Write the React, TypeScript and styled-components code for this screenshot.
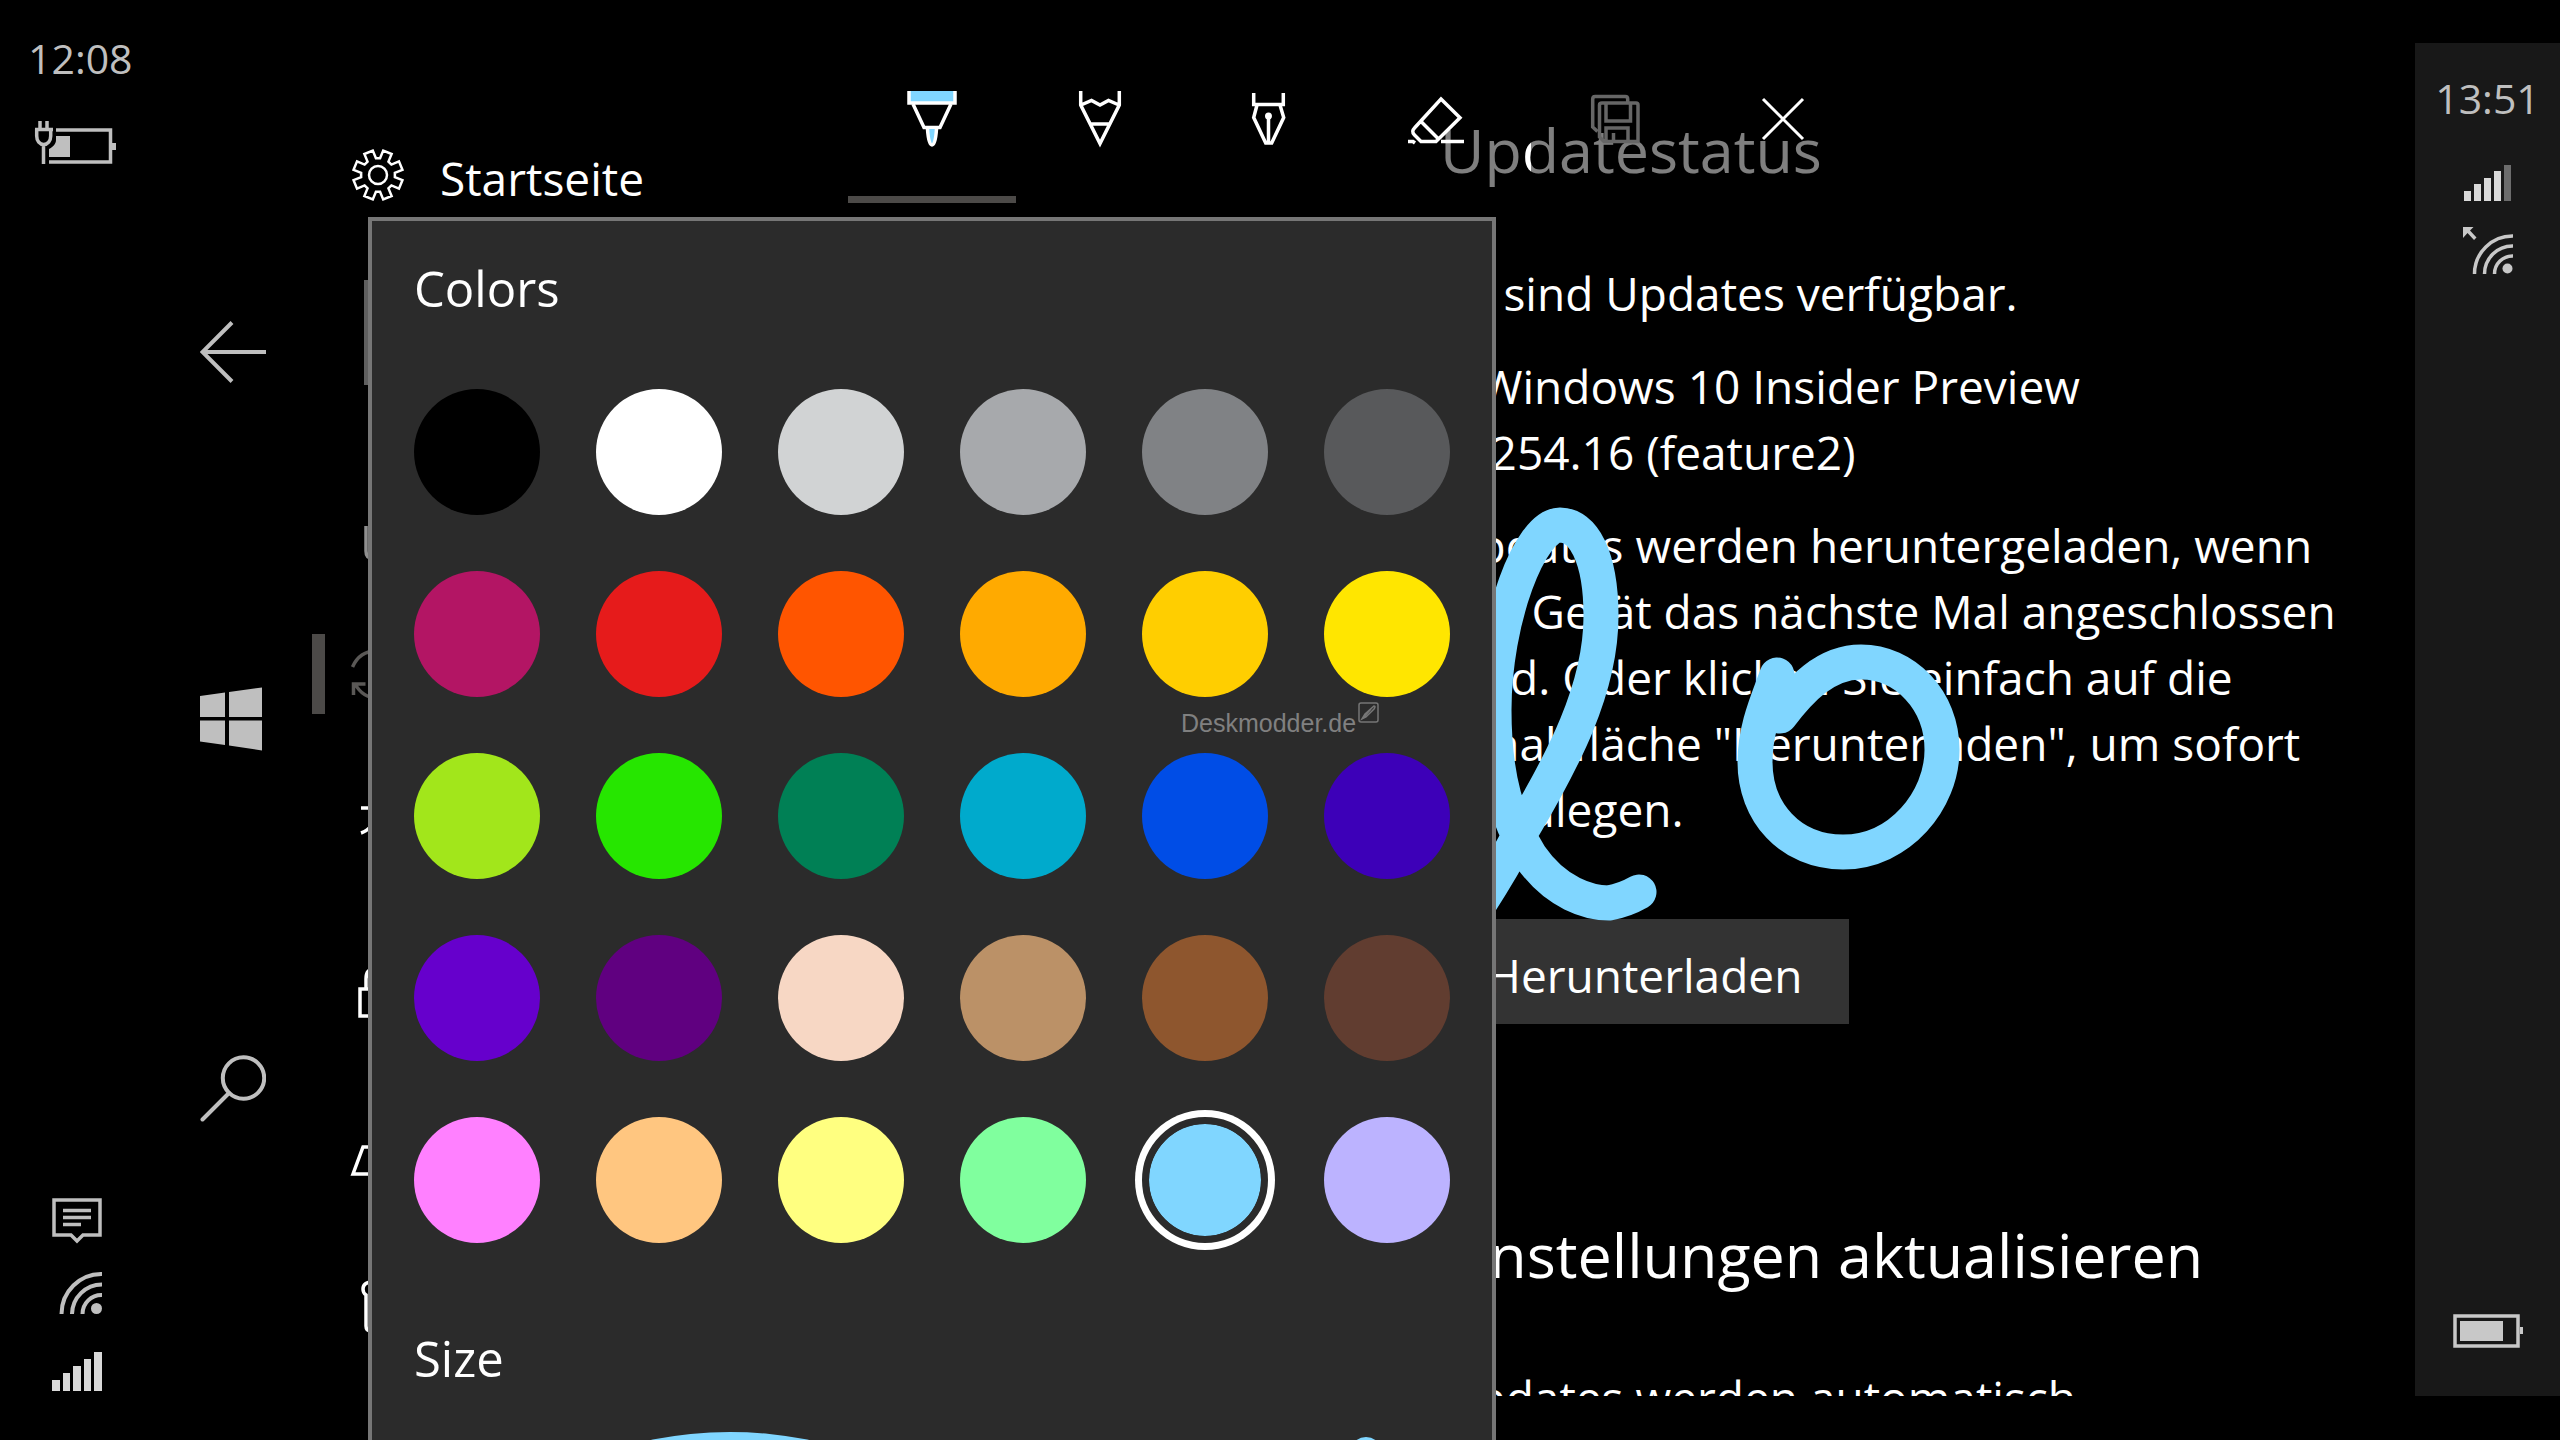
import React, { useState } from "react";
import styled, { createGlobalStyle } from "styled-components";

const accent = "#80d6ff";
const panelColor = "#2b2b2b";
const muted = "#bfbfbf";

const GlobalStyle = createGlobalStyle`
  * { box-sizing: border-box; }
  body {
    margin: 0;
    background: #000;
    color: #fff;
    font-family: "Segoe UI", "Open Sans", "Noto Sans", sans-serif;
  }
`;

const Desktop = styled.div`
  display: flex;
  height: 100vh;
  overflow: hidden;
  background: #000;
`;

const StatusColumn = styled.aside`
  display: flex;
  flex: none;
  flex-direction: column;
  justify-content: space-between;
  width: 168px;
  padding: 30px 0 49px;
`;

const StatusTop = styled.div`
  display: flex;
  flex-direction: column;
  gap: 34px;
  padding-left: 28px;
`;

const StatusBottom = styled.div`
  display: flex;
  flex-direction: column;
  gap: 28px;
  padding-left: 52px;
`;

const Clock = styled.time`
  font-size: 41px;
  line-height: 56px;
  color: ${muted};
`;

const Navigation = styled.nav`
  display: flex;
  flex: none;
  flex-direction: column;
  justify-content: space-between;
  width: 144px;
  padding: 321px 32px 318px;
`;

const NavButton = styled.button`
  display: flex;
  padding: 0;
  border: 0;
  background: none;
`;

const Screen = styled.div`
  position: relative;
  flex: 1;
  display: flex;
  min-width: 0;
  padding: 43px 0 44px;
`;

const SettingsPage = styled.div`
  display: flex;
  flex: 1;
  min-width: 0;
  overflow: hidden;
`;

const Sidebar = styled.div`
  flex: none;
  width: 1128px;
  padding-top: 100px;
`;

const HomeLink = styled.a`
  display: flex;
  align-items: center;
  gap: 34px;
  height: 64px;
  padding-left: 38px;
  color: #fff;
  font-size: 46px;
  line-height: 66px;
  text-decoration: none;
`;

const HomeLabel = styled.span`
  padding-top: 5px;
`;

const SearchBox = styled.input`
  display: block;
  width: 600px;
  height: 105px;
  margin: 73px 0 55px 52px;
  border: 4px solid #5f5f5f;
  background: #000;
`;

const Category = styled.a`
  display: flex;
  align-items: center;
  gap: 19px;
  height: 156px;
`;

const Marker = styled.span<{ $active: boolean }>`
  width: 13px;
  height: 80px;
  background: ${(p) => (p.$active ? "#4c4a48" : "transparent")};
`;

const Content = styled.main`
  flex: 1;
  min-width: 0;
  padding-top: 65px;
  white-space: nowrap;
`;

const Heading = styled.h1`
  margin: 0;
  font-size: 61px;
  font-weight: 400;
  line-height: 84px;
`;

const Section = styled.section`
  display: flex;
  flex-direction: column;
  align-items: flex-start;
  gap: 27px;
  padding: 68px 0 77px 4px;
`;

const Paragraph = styled.p<{ $indent?: number }>`
  margin: 0;
  font-size: 46px;
  line-height: 66px;
  text-indent: ${(p) => p.$indent ?? 0}px;
`;

const Release = styled(Paragraph)`
  margin-left: -6px;
`;

const DownloadButton = styled.button`
  display: block;
  height: 105px;
  margin-bottom: 189px;
  padding: 6px 47px 0;
  border: 0;
  background: #333;
  color: #fff;
  font: inherit;
  font-size: 46px;
`;

const UpdateNote = styled(Paragraph)`
  padding: 67px 0 0 4px;
`;

const PhoneStatus = styled.aside`
  display: flex;
  flex: none;
  flex-direction: column;
  align-items: center;
  width: 145px;
  padding: 27px 0 48px;
  background: #181818;
`;

const PhoneIcons = styled.div`
  display: flex;
  flex: 1;
  flex-direction: column;
  align-items: center;
  gap: 26px;
  padding-top: 38px;
`;

const Ink = styled.svg`
  position: absolute;
  top: 0;
  left: 1128px;
  pointer-events: none;
`;

const SketchSheet = styled.div`
  position: absolute;
  inset: 0 auto 0 56px;
  display: flex;
  flex-direction: column;
  gap: 14px;
  padding-top: 35px;
`;

const Toolbar = styled.div`
  display: flex;
  gap: 11px;
  padding-left: 480px;
`;

const ToolGroup = styled.div`
  display: flex;
  background: rgba(0, 0, 0, 0.5);
`;

const ToolButton = styled.button<{ $active?: boolean }>`
  display: flex;
  align-items: center;
  justify-content: center;
  width: 168px;
  height: 168px;
  padding: 7px 0 0;
  border: 0;
  border-bottom: 7px solid ${(p) => (p.$active ? "#4c4a48" : "transparent")};
  background: none;
  color: #fff;
  &:disabled { color: #666; }
`;

const Panel = styled.section`
  flex: 1;
  width: 1128px;
  min-height: 0;
  overflow: hidden;
  padding: 34px 42px 0;
  border: 4px solid #767676;
  border-bottom: 0;
  background: ${panelColor};
`;

const PanelTitle = styled.h2`
  margin: 0;
  font-size: 49px;
  font-weight: 400;
  line-height: 66px;
`;

const Swatches = styled.div`
  display: grid;
  grid-template-columns: repeat(6, 126px);
  gap: 56px;
  padding: 68px 0 82px;
`;

const Swatch = styled.input<{ $color: string }>`
  appearance: none;
  width: 126px;
  height: 126px;
  margin: 0;
  border-radius: 50%;
  background: ${(p) => p.$color};
  &:checked {
    border: 7px solid ${panelColor};
    background-clip: padding-box;
    box-shadow: 0 0 0 7px #fff;
  }
`;

const Preview = styled.svg`
  display: block;
  margin-top: 41px;
`;

const Watermark = styled.div`
  position: absolute;
  top: 702px;
  left: 869px;
  display: flex;
  align-items: flex-start;
  gap: 2px;
  color: #808080;
  font-family: "Liberation Sans Narrow", "Liberation Sans", sans-serif;
  font-size: 25px;
  line-height: 42px;
`;

const palette = [
  "#000000", "#ffffff", "#d1d3d4", "#a7a9ac", "#808285", "#58595b",
  "#b31564", "#e61b1b", "#ff5500", "#ffaa00", "#ffce00", "#ffe600",
  "#a2e61b", "#26e600", "#008055", "#00aacc", "#004de6", "#3d00b8",
  "#6600cc", "#600080", "#f7d7c4", "#bb9167", "#8e562e", "#613d30",
  "#ff80ff", "#ffc680", "#ffff80", "#80ff9e", "#80d6ff", "#bcb3ff",
];

function gearPath() {
  const points: string[] = [];
  for (let i = 0; i < 8; i++) {
    const corners = [[-7, 17], [7, 17], [12, 25], [33, 25]];
    for (const [offset, radius] of corners) {
      const a = ((i * 45 + offset) * Math.PI) / 180;
      points.push(`${(Math.sin(a) * radius).toFixed(2)} ${(-Math.cos(a) * radius).toFixed(2)}`);
    }
  }
  return `M${points.join("L")}Z`;
}

const GearIcon = () => (
  <svg width="56" height="56" viewBox="-28 -28 56 56" fill="none" stroke="#fff" strokeWidth="2.5">
    <path d={gearPath()} />
    <circle r="9" />
  </svg>
);

const ChargingIcon = () => (
  <svg width="92" height="46" viewBox="28 121 92 46" fill="none" stroke={muted} strokeWidth="3.5">
    <path d="M40 122v8M47 122v8M35 130.500h18M36.700 130v7c0 5 3 8.500 7 8.500s7-3.500 7-8.500v-7M43.500 146v19" />
    <path d="M56 131h54.500v32H49" />
    <path d="M56 137h14v21H49v-8c4-2 7-5 7-9zM112 144h4v7h-4z" fill={muted} stroke="none" />
  </svg>
);

const MessageIcon = () => (
  <svg width="50" height="46" viewBox="52 1198 50 46" fill="none" stroke={muted} strokeWidth="3.500">
    <path d="M54 1200h46v35H83l-6 6-6-6H54z" />
    <path d="M63 1210.500h28M63 1217.500h28M63 1224.500h18" />
  </svg>
);

const WifiIcon = () => (
  <svg width="50" height="42" viewBox="52 1272 50 42" fill="none" stroke={muted} strokeWidth="4">
    <path d="M61.500 1314a40 40 0 0 1 40.500-40M72 1314a30 30 0 0 1 30-29.500M82.500 1314a19 19 0 0 1 19.500-19" />
    <circle cx="96.500" cy="1308.500" r="5.500" fill={muted} stroke="none" />
  </svg>
);

const SignalIcon = () => (
  <svg width="50" height="49" viewBox="52 1342 50 49" fill="#d9d9d9">
    <path d="M52 1380h8v11h-8zM63 1373h7v18h-7zM73 1366h8v25h-8zM84 1359h7v32h-7zM94 1352h8v39h-8z" />
  </svg>
);

const PhoneSignalIcon = () => (
  <svg width="47" height="37" viewBox="2464 164 47 37" fill="#d9d9d9">
    <path d="M2464 191h7v10h-7zM2474 184h7v17h-7zM2484 178h7v23h-7zM2494 171h7v30h-7z" />
    <path d="M2504 165h7v36h-7z" fill="#6c6c6c" />
  </svg>
);

const PhoneWifiIcon = () => (
  <svg width="50" height="47" viewBox="2461 227 50 47" fill="none" stroke="#c8c8c8" strokeWidth="3.500">
    <path d="M2472.500 274a38 38 0 0 1 38.500-38M2482.500 274a28 28 0 0 1 28.500-28M2492.500 274a18 18 0 0 1 18.500-18" />
    <circle cx="2505.500" cy="268.500" r="5" fill="#c8c8c8" stroke="none" />
    <path d="M2461 227h10.500l-3.500 3.500 6.500 7-2.500 2.500-6.500-7-4.500 5z" fill="#c8c8c8" stroke="none" />
  </svg>
);

const PhoneBatteryIcon = () => (
  <svg width="70" height="34" viewBox="2454 1314 70 34" fill="none" stroke="#c8c8c8" strokeWidth="3.500">
    <path d="M2456 1316h63v30h-63z" />
    <path d="M2461 1321h43v20h-43zM2521 1327h3v7h-3z" fill="#c8c8c8" stroke="none" />
  </svg>
);

const BackIcon = () => (
  <svg width="66" height="62" viewBox="200 321 66 62" fill="none" stroke={muted} strokeWidth="4">
    <path d="M232 322.500l-29.500 29.500 29.500 29.500M203 352h63" />
  </svg>
);

const WindowsIcon = () => (
  <svg width="66" height="66" viewBox="200 685 66 66" fill={muted}>
    <path d="M200 695l25-3.500v24.500h-25zM229 691l33-4.500v29.500h-33zM200 719.500h25v24.500l-25-3.500zM229 719.500h33v30l-33-5z" />
  </svg>
);

const SearchIcon = () => (
  <svg width="66" height="67" viewBox="200 1055 66 67" fill="none" stroke={muted} strokeWidth="4" strokeLinecap="round">
    <circle cx="243.500" cy="1078" r="20.700" />
    <path d="M229 1093l-26.500 26.500" />
  </svg>
);

const categoryShapes = [
  <path key="system" d="M366 526v25q0 7 6 7h28v-32" stroke="#8f8f8f" />,
  <path key="update" d="M352.500 667q7-16 24-16M353.500 695v-11h12M355 684q8 14 22 14" stroke="#5a5856" />,
  <path key="language" d="M361 808h24M361 833q12-4 18-22" />,
  <path key="privacy" d="M360 989h36v27h-36zM366 989v-10q0-10 8-10" />,
  <path key="user" d="M353 1174l10-27h28l10 27zM370 1131v2" />,
  <path key="tools" d="M373 1282q-10 0-10 7 0 4 3 6v31q0 5 5 5h4" />,
];
const categoryNames = ["System", "Update", "Sprache", "Datenschutz", "Konten", "Extras"];

const MarkerPenIcon = () => (
  <svg width="60" height="60" viewBox="902 89 60 60" fill="none" stroke="#fff" strokeWidth="3.500">
    <path d="M909 91h46v12h-46z" fill={accent} stroke="none" />
    <path d="M909 91v12h46v-12" />
    <path d="M913 104l11 23.500h16l11-23.500" />
    <path d="M927.500 129q1 16 4.500 16t4.500-16" fill={accent} />
  </svg>
);

const PencilIcon = () => (
  <svg width="60" height="60" viewBox="1070 89 60 60" fill="none" stroke="#fff" strokeWidth="3.500">
    <path d="M1080.700 91v14l19.300 38.500 19.300-38.500v-14M1081 105l10.500-4.500 8.500 4.500 8.500-4.500 10.500 4.500M1091 124h18" />
  </svg>
);

const FountainPenIcon = () => (
  <svg width="60" height="60" viewBox="1238 89 60 60" fill="none" stroke="#fff" strokeWidth="3.500">
    <path d="M1253.700 93v11.500h29.600v-11.500M1257 105l-3.300 12.500 12 25.500h6l12-25.500-3.700-12.500M1268.500 117v26" />
    <circle cx="1268.500" cy="116" r="3.500" fill="#fff" stroke="none" />
  </svg>
);

const EraserIcon = () => (
  <svg width="60" height="60" viewBox="1406 89 60 60" fill="none" stroke="#fff" strokeWidth="3.500">
    <path d="M1441 99l19 18.700-24 23.800h-15l-6.500-6.500q-3.500-3.500 0-7zM1420.500 121l17 17M1408 141.500h5l2 1.500M1441 141.500h23" />
  </svg>
);

const SaveIcon = () => (
  <svg width="60" height="60" viewBox="1585 89 60 60" fill="none" stroke="currentColor" strokeWidth="3.500">
    <path d="M1597.500 131.500l-4.800-4.500v-28q0-2.500 2.500-2.500h30q2.500 0 2.500 2.500v4" />
    <path d="M1602 103h34q2 0 2 2v36.500h-34l-4.500-4.500v-32q0-2 2.500-2zM1606 104v17h24.500v-17M1606 141v-13h22v13M1613.500 133v8" />
  </svg>
);

const CloseIcon = () => (
  <svg width="60" height="60" viewBox="1753 89 60 60" fill="none" stroke="#fff" strokeWidth="3">
    <path d="M1763 99l40 40M1803 99l-40 40" />
  </svg>
);

export default function App() {
  const [color, setColor] = useState("#80d6ff");

  return (
    <>
      <GlobalStyle />
      <Desktop>
        <StatusColumn>
          <StatusTop>
            <Clock>12:08</Clock>
            <ChargingIcon />
          </StatusTop>
          <StatusBottom>
            <MessageIcon />
            <WifiIcon />
            <SignalIcon />
          </StatusBottom>
        </StatusColumn>

        <Navigation>
          <NavButton aria-label="Zurück"><BackIcon /></NavButton>
          <NavButton aria-label="Start"><WindowsIcon /></NavButton>
          <NavButton aria-label="Suchen"><SearchIcon /></NavButton>
        </Navigation>

        <Screen>
          <SettingsPage>
            <Sidebar>
              <HomeLink href="#start"><GearIcon /><HomeLabel>Startseite</HomeLabel></HomeLink>
              <SearchBox type="search" aria-label="Einstellung suchen" />
              {categoryShapes.map((shape, i) => (
                <Category key={categoryNames[i]} href={`#${categoryNames[i]}`} aria-label={categoryNames[i]}>
                  <Marker $active={i === 1} />
                  <svg width="60" height="156" viewBox={`344 ${440 + i * 156} 60 156`} fill="none" stroke="#fff" strokeWidth="3.500">
                    {shape}
                  </svg>
                </Category>
              ))}
            </Sidebar>
            <Content>
              <Heading>Updatestatus</Heading>
              <Section>
                <Paragraph>Es sind Updates verfügbar.</Paragraph>
                <Release $indent={42}>
                  Windows 10 Insider Preview<br />15254.16 (feature2)
                </Release>
                <Paragraph>
                  Updates werden heruntergeladen, wenn<br />
                  das Gerät das nächste Mal angeschlossen<br />
                  wird. Oder klicken Sie einfach auf die<br />
                  Schaltfläche "Herunterladen", um sofort<br />
                  loszulegen.
                </Paragraph>
              </Section>
              <DownloadButton>Herunterladen</DownloadButton>
              <Heading as="h2">Einstellungen aktualisieren</Heading>
              <UpdateNote>Updates werden automatisch</UpdateNote>
            </Content>
          </SettingsPage>

          <PhoneStatus>
            <Clock>13:51</Clock>
            <PhoneIcons>
              <PhoneSignalIcon />
              <PhoneWifiIcon />
            </PhoneIcons>
            <PhoneBatteryIcon />
          </PhoneStatus>

          <Ink width="560" height="960" viewBox="1440 0 560 960" fill="none" stroke={accent} strokeWidth="35" strokeLinecap="round" strokeLinejoin="round">
            <path d="M1466 924C1490 888 1508 858 1522 830C1562 762 1601 690 1601 616C1601 556 1583 525 1560 525C1530 525 1494 620 1494 710C1494 780 1508 820 1530 856C1556 894 1590 903 1609 903Q1625 900 1639 892" />
            <path d="M1777 675C1768 700 1755 728 1755 762C1755 812 1790 852 1843 852C1900 852 1942 800 1942 750C1942 700 1905 662 1861 662C1825 662 1800 690 1780 716" />
          </Ink>

          <SketchSheet>
            <Toolbar role="toolbar">
              <ToolGroup>
                <ToolButton $active aria-label="Marker"><MarkerPenIcon /></ToolButton>
                <ToolButton aria-label="Pencil"><PencilIcon /></ToolButton>
                <ToolButton aria-label="Pen"><FountainPenIcon /></ToolButton>
                <ToolButton aria-label="Eraser"><EraserIcon /></ToolButton>
              </ToolGroup>
              <ToolGroup>
                <ToolButton disabled aria-label="Save"><SaveIcon /></ToolButton>
                <ToolButton aria-label="Close"><CloseIcon /></ToolButton>
              </ToolGroup>
            </Toolbar>
            <Panel>
              <PanelTitle>Colors</PanelTitle>
              <Swatches role="radiogroup" aria-label="Colors">
                {palette.map((c) => (
                  <Swatch
                    key={c}
                    type="radio"
                    name="color"
                    aria-label={c}
                    $color={c}
                    checked={color === c}
                    onChange={() => setColor(c)}
                  />
                ))}
              </Swatches>
              <PanelTitle>Size</PanelTitle>
              <Preview width="1036" height="120" viewBox="414 1432 1036 120" fill={color}>
                <ellipse cx="730" cy="1532" rx="202" ry="100" />
                <circle cx="1366" cy="1453" r="16" />
              </Preview>
            </Panel>
          </SketchSheet>

          <Watermark>
            Deskmodder.de
            <svg width="21" height="21" viewBox="0 0 21 21" fill="none" stroke="#767676" strokeWidth="1.500">
              <rect x="1" y="1" width="19" height="19" rx="2" />
              <path d="M4 17l3-5 9-8q2 0 0 3l-8 8zM6 15l7-8" />
            </svg>
          </Watermark>
        </Screen>
      </Desktop>
    </>
  );
}
